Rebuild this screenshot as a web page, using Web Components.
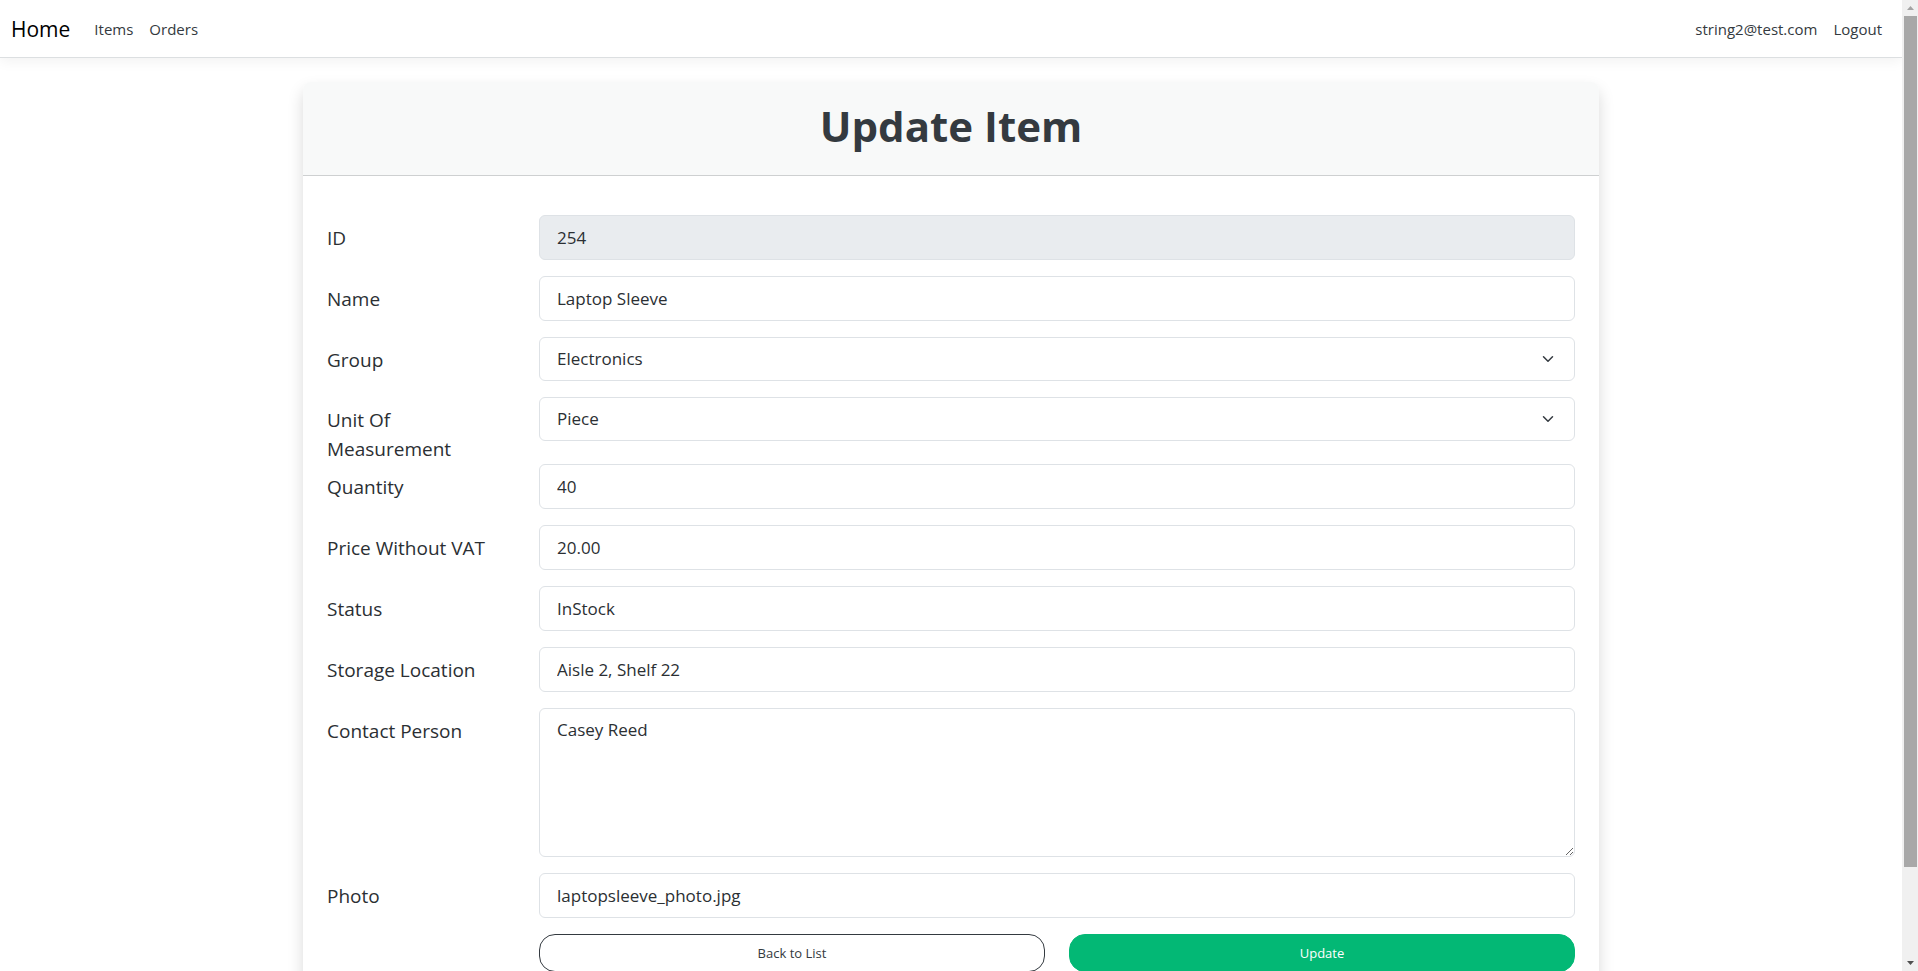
<!DOCTYPE html>
<html lang="en">
<head>
<meta charset="utf-8">
<meta name="viewport" content="width=device-width, initial-scale=1">
<title>Update Item</title>
<style>
  html, body { margin: 0; height: 100%; overflow: hidden; }
  body {
    font-family: "Open Sans", "Noto Sans", sans-serif;
    font-size: 15px;
    color: #2b2f33;
    background: #fff;
  }
</style>
</head>
<body>
<app-shell>
  <nav-bar slot="nav" brand="Home">
    <nav-link href="#items">Items</nav-link>
    <nav-link href="#orders">Orders</nav-link>
    <nav-link slot="end" href="#account">string2@test.com</nav-link>
    <nav-link slot="end" href="#logout">Logout</nav-link>
  </nav-bar>
  <form-card heading="Update Item">
    <form-field label="ID" value="254" readonly></form-field>
    <form-field label="Name" value="Laptop Sleeve"></form-field>
    <form-field label="Group" type="select" value="Electronics"></form-field>
    <form-field label="Unit Of Measurement" type="select" value="Piece"></form-field>
    <form-field label="Quantity" value="40"></form-field>
    <form-field label="Price Without VAT" value="20.00"></form-field>
    <form-field label="Status" value="InStock"></form-field>
    <form-field label="Storage Location" value="Aisle 2, Shelf 22"></form-field>
    <form-field label="Contact Person" type="textarea" value="Casey Reed"></form-field>
    <form-field label="Photo" value="laptopsleeve_photo.jpg"></form-field>
    <form-actions>
      <action-button>Back to List</action-button>
      <action-button variant="primary">Update</action-button>
    </form-actions>
  </form-card>
</app-shell>

<script>
const attach = (host, html) => {
  const root = host.attachShadow({ mode: "open" });
  root.innerHTML = html;
  return root;
};

/* Page frame: scrolling content with a scroll bar at its right. */
class AppShell extends HTMLElement {
  connectedCallback() {
    const root = attach(this, `
      <style>
        :host { display: grid; grid-template-columns: minmax(0, 1fr) 16px; height: 100vh; }
        .view { overflow: auto; scrollbar-width: none; }
        main { max-width: 1296px; margin: 0 auto; padding: 24px 12px 76px; }
      </style>
      <div class="view">
        <slot name="nav"></slot>
        <main><slot></slot></main>
      </div>
      <scroll-rail></scroll-rail>`);
    const view = root.querySelector(".view");
    const rail = root.querySelector("scroll-rail");
    const sync = () => rail.update(view);
    view.addEventListener("scroll", sync);
    new ResizeObserver(sync).observe(root.querySelector("main"));
    new ResizeObserver(sync).observe(view);
  }
}

class ScrollRail extends HTMLElement {
  connectedCallback() {
    this.root = attach(this, `
      <style>
        :host { display: flex; flex-direction: column; background: #f0f0f0; }
        svg { display: block; width: 16px; height: 16px; flex: none; }
        .track { flex: 1; min-height: 0; }
        .thumb { margin: 0 1px 0 2px; background: #a8a8a8; height: 90%; }
      </style>
      <svg viewBox="0 0 16 16" aria-hidden="true"><path d="M5 10 L8.500 6 L12 10 Z" fill="#a3a3a3"/></svg>
      <div class="track"><div class="thumb"></div></div>
      <svg viewBox="0 0 16 16" aria-hidden="true"><path d="M5 6 H12 L8.500 10 Z" fill="#505050"/></svg>`);
  }
  update(view) {
    const track = this.root.querySelector(".track").clientHeight;
    const thumb = this.root.querySelector(".thumb");
    thumb.style.height = Math.round(track * view.clientHeight / view.scrollHeight) + "px";
    thumb.style.transform = `translateY(${Math.round(track * view.scrollTop / view.scrollHeight)}px)`;
  }
}

class NavBar extends HTMLElement {
  connectedCallback() {
    attach(this, `
      <style>
        :host { display: block; }
        nav {
          display: flex; align-items: center; justify-content: space-between;
          height: 57px; padding: 0 20px 0 11px;
          border-bottom: 1px solid #dcdfe1;
          box-shadow: 0 4px 12px rgba(0, 0, 0, .05);
        }
        div { display: flex; align-items: center; gap: 16px; }
        .brand { font-size: 21px; line-height: 32px; color: #000; text-decoration: none; margin-right: 8px; }
      </style>
      <nav>
        <div><a class="brand" href="#home">${this.getAttribute("brand")}</a><slot></slot></div>
        <div><slot name="end"></slot></div>
      </nav>`);
  }
}

class NavLink extends HTMLElement {
  connectedCallback() {
    attach(this, `
      <style>
        :host { display: block; }
        a { color: #343a40; text-decoration: none; font-size: 15px; line-height: 24px; }
      </style>
      <a href="${this.getAttribute("href")}"><slot></slot></a>`);
  }
}

class FormCard extends HTMLElement {
  connectedCallback() {
    attach(this, `
      <style>
        :host { display: block; }
        section { border-radius: 8px; background: #fff; box-shadow: 0 8px 16px rgba(0, 0, 0, .15); }
        header {
          padding: 16px; background: #f8f9f9; border-bottom: 1px solid #ced0d1;
          border-radius: 8px 8px 0 0; text-align: center;
        }
        h1 { margin: 0; padding-bottom: 5px; font-size: 42px; line-height: 56px; font-weight: 700; color: #343a40; }
        form { padding: 39px 24px 24px; }
      </style>
      <section>
        <header><h1>${this.getAttribute("heading")}</h1></header>
        <form><slot></slot></form>
      </section>`);
  }
}

class FormField extends HTMLElement {
  connectedCallback() {
    const label = this.getAttribute("label");
    const value = this.getAttribute("value");
    const type = this.getAttribute("type");
    const lock = this.hasAttribute("readonly") ? "readonly" : "";
    let control = `<input id="control" type="text" value="${value}" ${lock}>`;
    if (type === "select") {
      control = `<select id="control"><option>${value}</option></select>
        <svg viewBox="0 0 16 16" aria-hidden="true"><path d="m2 5 6 6 6-6" fill="none" stroke="#343a40" stroke-width="2" stroke-linecap="round" stroke-linejoin="round"/></svg>`;
    } else if (type === "textarea") {
      control = `<textarea id="control">${value}</textarea>`;
    }
    attach(this, `
      <style>
        :host { display: grid; grid-template-columns: repeat(12, minmax(0, 1fr)); column-gap: 24px; align-items: start; }
        label { grid-column: span 2; padding-top: 9px; font-size: 19px; line-height: 29px; }
        .control { grid-column: span 10; display: grid; align-items: center; margin-bottom: 16px; }
        input, select, textarea {
          grid-area: 1 / 1; box-sizing: border-box; width: 100%; margin: 0; padding: 8px 17px;
          border: 1px solid #dee2e6; border-radius: 6px; background: #fff;
          font: inherit; font-size: 17px; line-height: 26px; color: #2b2f33; outline: none;
        }
        input { height: 45px; }
        input[readonly] { background: #e9ecef; }
        select { height: 44px; appearance: none; }
        textarea { display: block; height: 149px; resize: vertical; }
        svg { grid-area: 1 / 1; justify-self: end; width: 12px; height: 12px; margin-right: 21px; pointer-events: none; }
      </style>
      <label for="control">${label}</label>
      <div class="control">${control}</div>`);
  }
}

class FormActions extends HTMLElement {
  connectedCallback() {
    attach(this, `
      <style>
        :host { display: grid; grid-template-columns: repeat(12, minmax(0, 1fr)); column-gap: 24px; }
        div { grid-column: 3 / -1; display: grid; grid-template-columns: 1fr 1fr; gap: 24px; }
      </style>
      <div><slot></slot></div>`);
  }
}

class ActionButton extends HTMLElement {
  connectedCallback() {
    attach(this, `
      <style>
        :host { display: block; }
        button {
          display: block; width: 100%; height: 38px; padding: 0 16px; border: 1px solid #343a40; border-radius: 16px;
          background: #fff; color: #343a40; font: inherit; font-size: 13px; cursor: pointer;
        }
        :host([variant="primary"]) button { background: #03b875; border-color: #03b875; color: #fff; }
      </style>
      <button type="button"><slot></slot></button>`);
  }
}

customElements.define("scroll-rail", ScrollRail);
customElements.define("nav-link", NavLink);
customElements.define("nav-bar", NavBar);
customElements.define("form-field", FormField);
customElements.define("action-button", ActionButton);
customElements.define("form-actions", FormActions);
customElements.define("form-card", FormCard);
customElements.define("app-shell", AppShell);
</script>
</body>
</html>
